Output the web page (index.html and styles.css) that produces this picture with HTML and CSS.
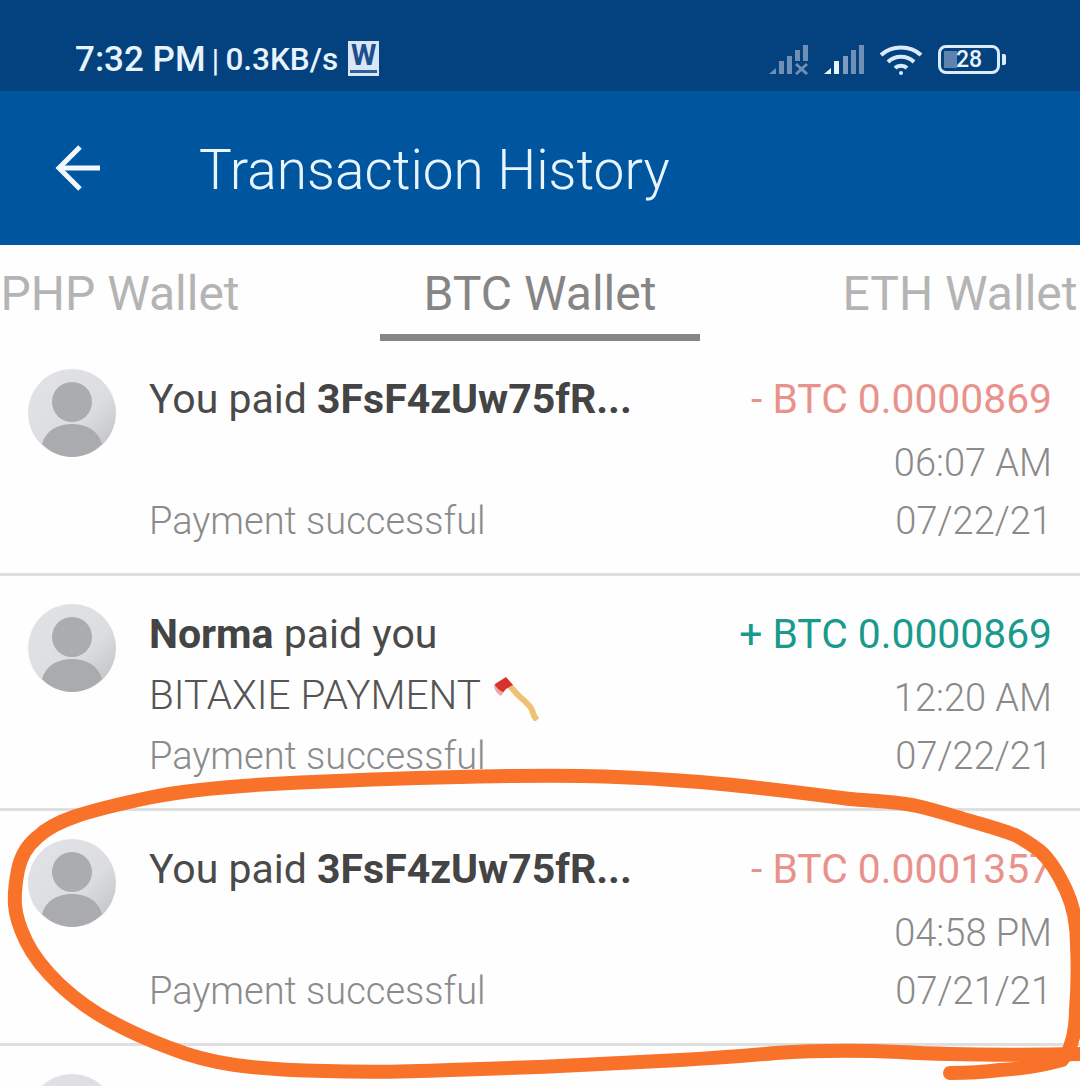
FILE: index.html
```html
<!DOCTYPE html>
<html lang="en">
<head>
  <meta charset="UTF-8">
  <meta name="viewport" content="width=device-width, initial-scale=1.0">
  <title>Transaction History</title>
  <link rel="stylesheet" href="styles.css">
</head>
<body>

  <svg width="0" height="0" class="defs">
    <defs>
      <linearGradient id="avatar-bg" x1="0" y1="0" x2="1" y2="1">
        <stop offset="0" stop-color="#e2e3e6"/>
        <stop offset="0.6" stop-color="#dcdde0"/>
        <stop offset="1" stop-color="#bcbdc1"/>
      </linearGradient>
      <symbol id="avatar" viewBox="0 0 88 88">
        <circle cx="44" cy="44" r="44" fill="url(#avatar-bg)"/>
        <circle cx="44" cy="33" r="20" fill="#abacb0"/>
        <path d="M14 75 C18 61 30 55 44 55 C58 55 70 61 74 75 C66 83 55 88 44 88 C33 88 22 83 14 75 Z" fill="#aaabaf"/>
      </symbol>
    </defs>
  </svg>

  <header class="status-bar">
    <div class="status-left">
      <span class="clock">7:32 PM</span>
      <span class="sep">|</span>
      <span class="speed">0.3KB/s</span>
      <span class="word-icon">W</span>
    </div>
    <div class="status-right">
      <svg width="42" height="30" viewBox="0 0 42 30">
        <g fill="#6f8fb5">
          <path d="M0 29 L7 23 V29 Z"/>
          <rect x="10" y="16" width="5" height="13"/>
          <rect x="18" y="11" width="5" height="18"/>
          <rect x="26" y="5" width="5" height="11"/>
          <rect x="34" y="0" width="5" height="16"/>
        </g>
        <path d="M27 19 L38 29 M38 19 L27 29" stroke="#6f8fb5" stroke-width="3"/>
      </svg>
      <svg width="42" height="30" viewBox="0 0 42 30">
        <path d="M0 29 L7 23 V29 Z" fill="#e8f3fc"/>
        <rect x="10" y="16" width="5" height="13" fill="#e8f3fc"/>
        <rect x="19" y="11" width="5" height="18" fill="#7f9cbf"/>
        <rect x="27" y="5" width="5" height="24" fill="#6f8fb5"/>
        <rect x="35" y="0" width="5" height="29" fill="#6f8fb5"/>
      </svg>
      <svg width="44" height="32" viewBox="0 0 44 32" fill="none" stroke="#dcebf9" stroke-width="4">
        <path d="M2 11 C13 1 31 1 42 11"/>
        <path d="M9 18 C16 11 28 11 35 18"/>
        <path d="M16 24 C19 21 25 21 28 24"/>
        <circle cx="22" cy="29" r="2" fill="#dcebf9" stroke="none"/>
      </svg>
      <div class="battery">
        <div class="battery-body">
          <div class="battery-level"></div>
          <span class="battery-num">28</span>
        </div>
        <div class="battery-tip"></div>
      </div>
    </div>
  </header>

  <div class="app-bar">
    <svg class="back" width="46" height="46" viewBox="0 0 46 46" fill="none" stroke="#f1f8fe" stroke-width="5">
      <path d="M45 23 H4"/>
      <path d="M25 2 L4 23 L25 44"/>
    </svg>
    <h1>Transaction History</h1>
  </div>

  <nav class="tabs">
    <div class="tab">PHP Wallet</div>
    <div class="tab active">BTC Wallet</div>
    <div class="tab">ETH Wallet</div>
  </nav>

  <section class="list">
    <div class="row">
      <svg class="avatar"><use href="#avatar"/></svg>
      <div class="info">
        <div class="title">You paid <b>3FsF4zUw75fR...</b></div>
        <div class="note"></div>
        <div class="state">Payment successful</div>
      </div>
      <div class="side">
        <div class="amount out">- BTC 0.0000869</div>
        <div class="time">06:07 AM</div>
        <div class="date">07/22/21</div>
      </div>
    </div>

    <div class="row">
      <svg class="avatar"><use href="#avatar"/></svg>
      <div class="info">
        <div class="title"><b>Norma</b> paid you</div>
        <div class="note">BITAXIE PAYMENT
          <svg class="axe" width="48" height="44" viewBox="0 0 48 44">
            <path d="M15 7 C19 11 22 15 26 19 C32 24 37 28 39 33 C40 37 41 40 44 43" fill="none" stroke="#eec274" stroke-width="6"/>
            <path d="M2 7 L13 0 L20 8 L13 12 L8 18 C4 16 2 12 2 7 Z" fill="#d8322e"/>
            <path d="M1 7 C1 12 3 16 8 19 L10 15 C7 14 4 11 1 7 Z" fill="#eda5a0"/>
          </svg>
        </div>
        <div class="state">Payment successful</div>
      </div>
      <div class="side">
        <div class="amount in">+ BTC 0.0000869</div>
        <div class="time">12:20 AM</div>
        <div class="date">07/22/21</div>
      </div>
    </div>

    <div class="row">
      <svg class="avatar"><use href="#avatar"/></svg>
      <div class="info">
        <div class="title">You paid <b>3FsF4zUw75fR...</b></div>
        <div class="note"></div>
        <div class="state">Payment successful</div>
      </div>
      <div class="side">
        <div class="amount out">- BTC 0.0001357</div>
        <div class="time">04:58 PM</div>
        <div class="date">07/21/21</div>
      </div>
    </div>

    <div class="row">
      <svg class="avatar"><use href="#avatar"/></svg>
    </div>
  </section>

  <!-- hand drawn circle on top of the screenshot -->
  <svg class="scribble" width="1080" height="1086" viewBox="0 0 1080 1086" fill="none" stroke="#f9722a" stroke-width="14" stroke-linecap="round" stroke-linejoin="round">
    <path d="M850 799 Q750 786 700 782 Q650 778 605 776.5 Q560 775 480 776.5 Q400 778 300 782.5 Q200 787 150 797.5 Q100 808 75 816.5 Q50 825 37 837.5 Q22 850 18 870 Q14 890 15 905 Q16 920 26 941 Q36 962 60 985 Q85 1008 112 1022 Q140 1037 170 1048 Q200 1060 235 1065 Q270 1070 325 1071 Q380 1073 450 1070 Q520 1068 580 1065 Q640 1062 680 1060 Q720 1058 776 1053 Q833 1049 900 1052 Q967 1056 1085 1054"/>
    <path d="M1062 1060 C1040 1066 1020 1069 1000 1070 C985 1072 965 1073 950 1073"/>
    <path d="M1066 1056 C1072 1045 1076 1030 1076 1010 C1078 985 1078 965 1077 945 C1077 925 1073 905 1066 890 C1059 875 1050 860 1040 851 C1032 845 1025 840 1015 835 C1000 829 985 825 967 820 C950 815 935 810 917 806 C895 801 870 801 850 799"/>
  </svg>

</body>
</html>
```
FILE: styles.css
```css
html, body {
  margin: 0;
  padding: 0;
  height: 1086px;
  overflow: hidden;
}

body {
  position: relative;
  font-family: Roboto, "Liberation Sans", sans-serif;
  background-color: #fefefe;
}

.defs {
  display: block;
}

/* status bar */
.status-bar {
  display: flex;
  justify-content: space-between;
  align-items: center;
  box-sizing: border-box;
  height: 91px;
  padding: 28px 74px 0 75px;
  background-color: #04417f;
  color: #e8f3fc;
}

.status-left {
  display: flex;
  align-items: center;
  gap: 6px;
}

.clock {
  font-size: 35px;
  font-weight: 500;
}

.sep {
  font-size: 32px;
}

.speed {
  font-size: 31.5px;
  font-weight: 500;
}

.word-icon {
  box-sizing: border-box;
  width: 31px;
  height: 35px;
  margin: -3px 0 0 4px;
  background: linear-gradient(#2f5f98, #2f5f98) center bottom 3px / 27px 3px no-repeat, #d8e6f5;
  color: #1d4f8c;
  font-size: 29px;
  font-weight: 700;
  line-height: 29px;
  text-align: center;
}

.status-right {
  display: flex;
  align-items: center;
  gap: 13px;
}

.battery {
  display: flex;
  align-items: center;
  gap: 2px;
  margin-left: 2px;
}

.battery-body {
  position: relative;
  box-sizing: border-box;
  width: 62px;
  height: 29px;
  border: 3px solid #dcebf9;
  border-radius: 8px;
  text-align: center;
}

.battery-level {
  position: absolute;
  left: 3px;
  top: 3px;
  bottom: 3px;
  width: 13px;
  background-color: #5d83ae;
}

.battery-num {
  position: relative;
  display: block;
  font-size: 23px;
  font-weight: 500;
  line-height: 23px;
}

.battery-tip {
  width: 4px;
  height: 11px;
  background-color: #dcebf9;
  border-radius: 0 2px 2px 0;
}

/* app bar */
.app-bar {
  display: flex;
  align-items: center;
  box-sizing: border-box;
  height: 154px;
  padding-left: 55px;
  background-color: #00559f;
}

.back {
  margin-right: 98px;
}

.app-bar h1 {
  margin: 0;
  padding-top: 4px;
  color: #e9f5fe;
  font-size: 55px;
  font-weight: 300;
}

/* tabs */
.tabs {
  display: flex;
  justify-content: space-between;
  height: 96px;
}

.tab {
  box-sizing: border-box;
  width: 240px;
  height: 96px;
  color: #b4b4b4;
  font-size: 48px;
  line-height: 98px;
  text-align: center;
  white-space: nowrap;
}

.tab.active {
  width: 320px;
  border-bottom: 7px solid #858585;
  color: #858585;
}

/* list */
.list {
  height: 745px;
  overflow: hidden;
}

.row {
  display: flex;
  box-sizing: border-box;
  height: 235px;
  padding: 28px 28px 0 28px;
  border-bottom: 3px solid #dfdfdf;
}

.avatar {
  flex: none;
  width: 88px;
  height: 88px;
  margin-right: 33px;
}

.info {
  flex: 1;
  font-size: 41px;
  line-height: 61px;
}

.title {
  height: 61px;
  color: #4a4a4a;
  white-space: nowrap;
}

.title b {
  color: #444;
  font-weight: 700;
}

.note {
  height: 61px;
  color: #555;
  font-size: 40.5px;
  font-weight: 300;
  white-space: nowrap;
}

.axe {
  vertical-align: -12px;
  margin-left: 3px;
}

.state {
  height: 61px;
  color: #8b8b8b;
  font-size: 38px;
  font-weight: 300;
  white-space: nowrap;
}

.side {
  font-size: 38px;
  line-height: 61px;
  text-align: right;
  white-space: nowrap;
}

.amount {
  height: 64px;
  font-size: 40.8px;
}

.amount.out {
  color: #e8928b;
}

.amount.in {
  color: #189a8c;
}

.time,
.date {
  color: #8a8a8a;
  font-weight: 300;
}

.time {
  height: 58px;
}

/* marker on top of everything */
.scribble {
  position: absolute;
  left: 0;
  top: 0;
}
```
